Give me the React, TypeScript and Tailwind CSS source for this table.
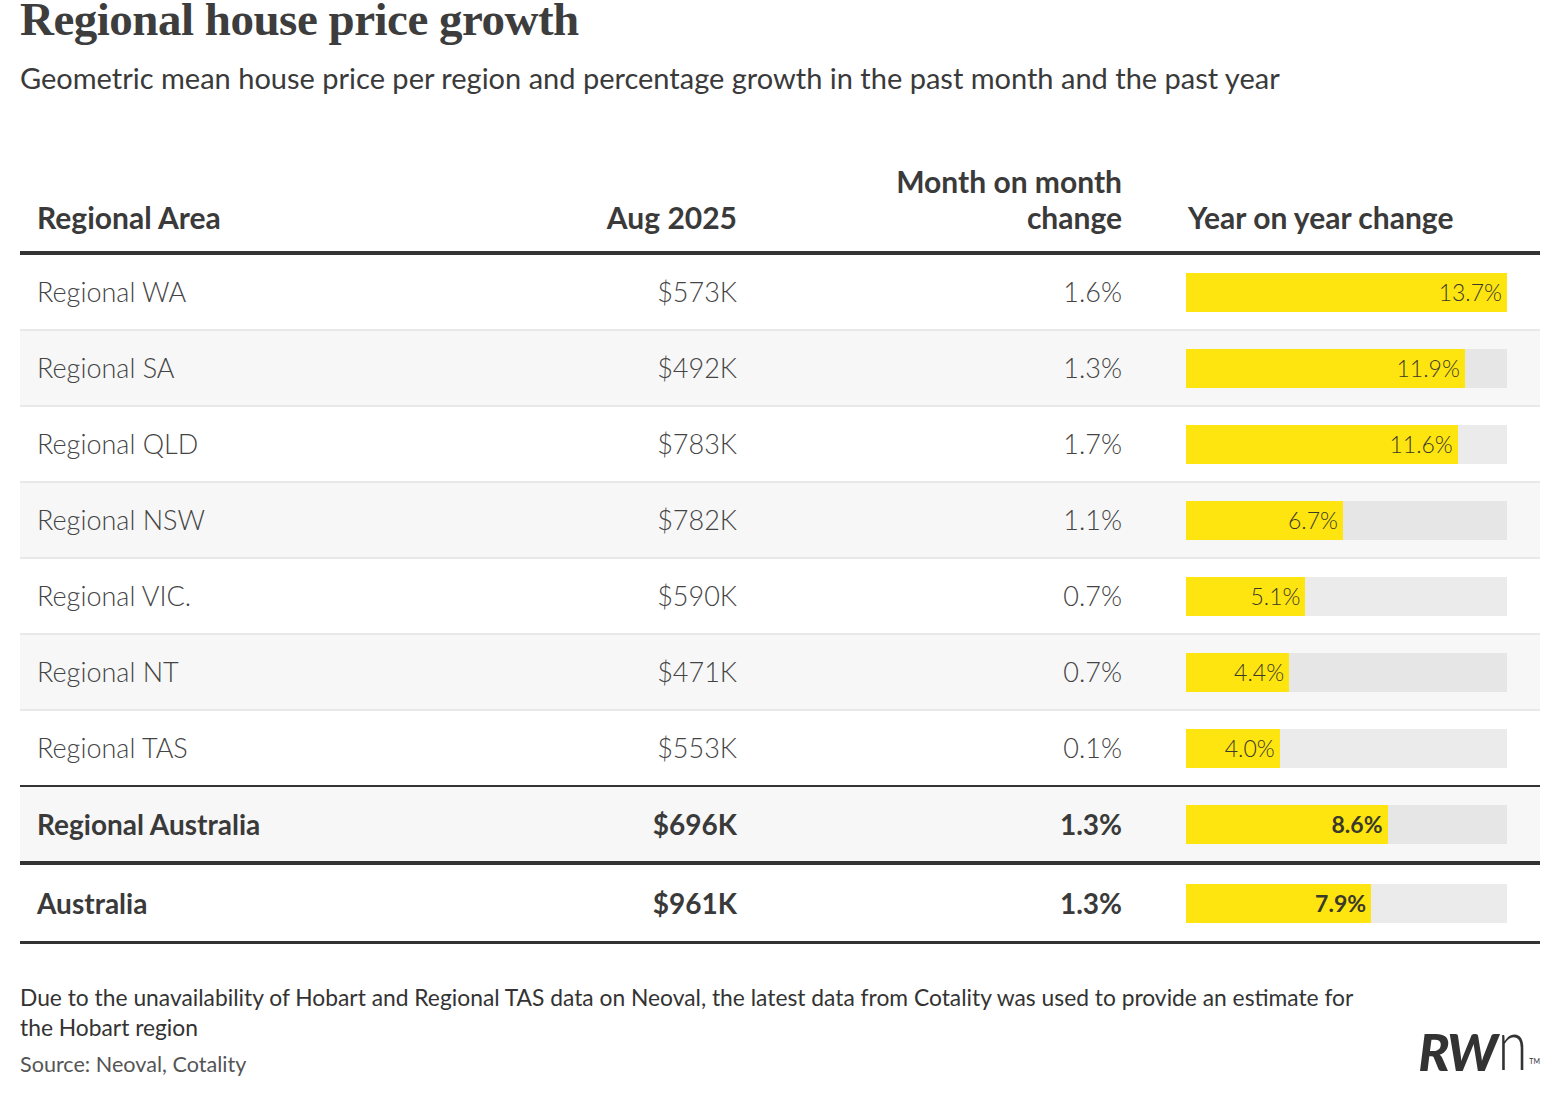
import React from "react";

type Row = {
  area: string;
  price: string;
  mom: string;
  yoy: number;
};

const regions: Row[] = [
  { area: "Regional WA", price: "$573K", mom: "1.6%", yoy: 13.7 },
  { area: "Regional SA", price: "$492K", mom: "1.3%", yoy: 11.9 },
  { area: "Regional QLD", price: "$783K", mom: "1.7%", yoy: 11.6 },
  { area: "Regional NSW", price: "$782K", mom: "1.1%", yoy: 6.7 },
  { area: "Regional VIC.", price: "$590K", mom: "0.7%", yoy: 5.1 },
  { area: "Regional NT", price: "$471K", mom: "0.7%", yoy: 4.4 },
  { area: "Regional TAS", price: "$553K", mom: "0.1%", yoy: 4.0 },
];

const MAX = 13.7;

const cols = "grid grid-cols-[400px_333px_385px_402px]";

// yellow bar on a grey track, label sits at the end of the yellow part
const Bar = ({ value, bold, shaded }: { value: number; bold?: boolean; shaded?: boolean }) => (
  <div className={`w-[321px] h-[39px] flex ${shaded ? "bg-[#e6e6e6]" : "bg-[#ebebeb]"}`}>
    <div
      className={`h-full bg-[#ffe50f] flex items-center justify-end pr-[5px] text-[23px] text-[#3a3a2a] ${
        bold ? "font-bold" : "font-light"
      }`}
      style={{ width: `${(value / MAX) * 100}%` }}
    >
      {value.toFixed(1)}%
    </div>
  </div>
);

const App: React.FC = () => {
  return (
    <div className="w-[1560px] h-[1097px] bg-white px-[20px] overflow-hidden font-['Lato',sans-serif] text-[#333]">
      {/* Heading */}
      <h1 className="font-['Liberation_Serif',serif] font-bold text-[47px] leading-[38px] tracking-[-0.5px] text-[#3d3d3d]">
        Regional house price growth
      </h1>
      <p className="mt-[23px] text-[29px] leading-[34px] text-[#3a3a3a]">
        Geometric mean house price per region and percentage growth in the past month and the past year
      </p>

      {/* Table */}
      <div className="mt-[68px] w-[1520px]">
        <div className={`${cols} border-b-4 border-[#333] pb-[16px] text-[30px] font-bold leading-[36px] text-[#3a3a3a]`}>
          <div className="pl-[17px] self-end">Regional Area</div>
          <div className="pr-[16px] text-right self-end">Aug 2025</div>
          <div className="pr-[16px] text-right self-end">
            Month on month
            <br />
            change
          </div>
          <div className="pl-[50px] self-end">Year on year change</div>
        </div>

        {regions.map((r, i) => {
          const shaded = i % 2 === 1;
          const last = i === regions.length - 1;
          return (
            <div
              key={r.area}
              className={`${cols} h-[76px] items-center border-b-2 text-[27px] font-light text-[#444] ${
                last ? "border-[#333]" : "border-[#e8e8e8]"
              } ${shaded ? "bg-[#f7f7f7]" : "bg-white"}`}
            >
              <div className="pl-[17px]">{r.area}</div>
              <div className="pr-[16px] text-right">{r.price}</div>
              <div className="pr-[16px] text-right">{r.mom}</div>
              <div className="pl-[48px]">
                <Bar value={r.yoy} shaded={shaded} />
              </div>
            </div>
          );
        })}

        <div className={`${cols} h-[78px] items-center border-b-4 border-[#333] bg-[#f7f7f7] text-[28px] font-bold text-[#3a3a3a]`}>
          <div className="pl-[17px]">Regional Australia</div>
          <div className="pr-[16px] text-right">$696K</div>
          <div className="pr-[16px] text-right">1.3%</div>
          <div className="pl-[48px]">
            <Bar value={8.6} bold shaded />
          </div>
        </div>

        <div className={`${cols} h-[79px] items-center border-b-[3px] border-[#333] text-[28px] font-bold text-[#3a3a3a]`}>
          <div className="pl-[17px]">Australia</div>
          <div className="pr-[16px] text-right">$961K</div>
          <div className="pr-[16px] text-right">1.3%</div>
          <div className="pl-[48px]">
            <Bar value={7.9} bold />
          </div>
        </div>
      </div>

      {/* Notes + logo */}
      <div className="mt-[38px] flex justify-between items-end">
        <div>
          <p className="w-[1360px] text-[22.8px] leading-[30px] text-[#333]">
            Due to the unavailability of Hobart and Regional TAS data on Neoval, the latest data from Cotality was used to provide an estimate for the Hobart region
          </p>
          <p className="mt-[8px] text-[21.6px] leading-[28px] text-[#555]">Source: Neoval, Cotality</p>
        </div>
        <div className="flex items-end text-[#333] leading-none mb-[5px]">
          <span className="text-[52px] font-black italic tracking-[-2px] leading-[44px]">RW</span>
          <span className="text-[54px] font-light ml-[2px] leading-[44px] scale-y-[1.33] origin-bottom inline-block">n</span>
          <span className="text-[7px] ml-[2px] mb-[8px]">TM</span>
        </div>
      </div>
    </div>
  );
};

export default App;
